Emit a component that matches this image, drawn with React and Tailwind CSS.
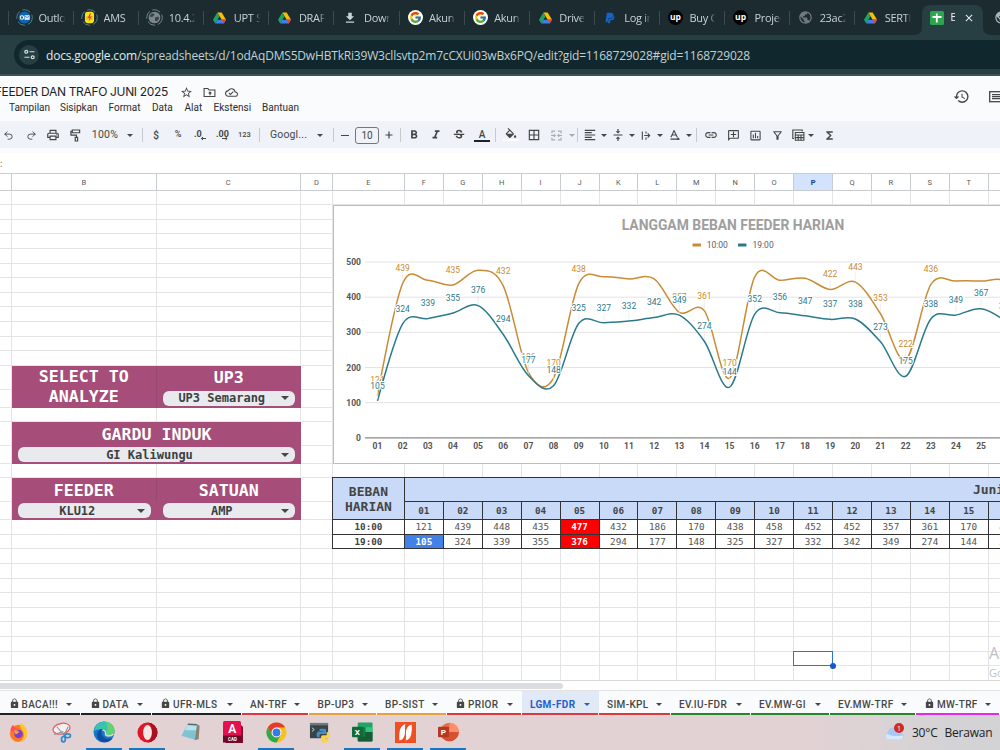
import React from 'react'
import { Undo2, Redo2 } from 'lucide-react'
import { FcGoogle } from 'react-icons/fc'
import { FaPaypal } from 'react-icons/fa'
import {
  MdOutlineLocalPrintshop,
  MdFormatBold,
  MdFormatItalic,
  MdStrikethroughS,
  MdFormatColorFill,
  MdBorderAll,
  MdFormatAlignLeft,
  MdLink,
  MdOutlineAddComment,
  MdInsertChartOutlined,
  MdOutlineFilterAlt,
  MdFunctions,
  MdHistory,
  MdStarBorder,
  MdOutlineCloudDone,
  MdLock,
  MdDownload,
  MdPublic,
  MdClose,
} from 'react-icons/md'

// ---------- data ----------

const browserTabs = [
  { icon: 'outlook', label: 'Outlook' },
  { icon: 'ams', label: 'AMS' },
  { icon: 'globeRing', label: '10.4.2' },
  { icon: 'drive', label: 'UPT S' },
  { icon: 'drive', label: 'DRAFT' },
  { icon: 'download', label: 'Downl' },
  { icon: 'google', label: 'Akun' },
  { icon: 'google', label: 'Akun' },
  { icon: 'drive', label: 'Drive' },
  { icon: 'paypal', label: 'Log in' },
  { icon: 'up', label: 'Buy C' },
  { icon: 'up', label: 'Projec' },
  { icon: 'globe', label: '23ac2' },
  { icon: 'drive', label: 'SERTI' },
]

const columns = ['', 'B', 'C', 'D', 'E', 'F', 'G', 'H', 'I', 'J', 'K', 'L', 'M', 'N', 'O', 'P', 'Q', 'R', 'S', 'T', 'U']

const morning = [121, 439, 448, 435, 477, 432, 186, 170, 438, 458, 452, 452, 357, 361, 170, 458, 448, 454, 422, 443, 353, 222, 436, 446, 446, 444, 360]
const evening = [105, 324, 339, 355, 376, 294, 177, 148, 325, 327, 332, 342, 349, 274, 144, 352, 356, 347, 337, 338, 273, 175, 338, 349, 367, 331, 270]

// days that have a visible label on the 10:00 line
const morningLabels = [1, 2, 4, 6, 7, 8, 9, 13, 14, 15, 19, 20, 21, 22, 23]

const sheetTabs = [
  { name: 'BACA!!!', lock: true, size: 'w-[81px]', line: 'border-[#202124]' },
  { name: 'DATA', lock: true, size: 'w-[70.5px]', line: 'border-[#202124]' },
  { name: 'UFR-MLS', lock: true, size: 'w-[90px]', line: 'border-[#202124]' },
  { name: 'AN-TRF', size: 'w-[67.5px]', line: 'border-[#d93a3f]' },
  { name: 'BP-UP3', size: 'w-[67.5px]', line: 'border-[#e9a23b]' },
  { name: 'BP-SIST', size: 'w-[70px]', line: 'border-[#e9a23b]' },
  { name: 'PRIOR', lock: true, size: 'w-[75px]', line: 'border-[#d93a3f]' },
  { name: 'LGM-FDR', active: true, size: 'w-[77px]', line: 'border-[#d93a3f]' },
  { name: 'SIM-KPL', size: 'w-[72px]', line: 'border-[#d93a3f]' },
  { name: 'EV.IU-FDR', size: 'w-[80px]', line: 'border-[#26862c]' },
  { name: 'EV.MW-GI', size: 'w-[79px]', line: 'border-[#26862c]' },
  { name: 'EV.MW-TRF', size: 'w-[86px]', line: 'border-[#26862c]' },
  { name: 'MW-TRF', lock: true, size: 'w-[84.5px]', line: 'border-[#e22be6]' },
]

const gridCols = 'grid-cols-[12px_144.5px_144.5px_32px_71.9px_repeat(16,38.93px)]'
const gridRows =
  'grid-rows-[repeat(12,14.6px)_24.2px_17.9px_14.4px_24px_17.8px_14.1px_24px_18px_14.7px_14.6px_repeat(9,14.6px)]'

// ---------- small drawings ----------

const DriveIcon = () => (
  <svg viewBox="0 0 24 22" className="h-[12px] w-[13px]">
    <path d="M8 1h8l8 13h-8z" fill="#fbbc04" />
    <path d="M8 1 0 14l4 7 8-13z" fill="#1ea362" />
    <path d="M8 14h16l-4 7H4z" fill="#3f7ef0" />
    <path d="M16 14h8l-4 7z" fill="#ea4335" />
  </svg>
)

const TabIcon = ({ name }) => {
  switch (name) {
    case 'outlook':
      return (
        <svg viewBox="0 0 18 18" className="h-[17px] w-[17px]">
          <circle cx="9" cy="9" r="8.2" fill="none" stroke="#4b8a94" strokeWidth="1" strokeDasharray="9 3" />
          <circle cx="9" cy="9" r="6.3" fill="#0a66b8" />
          <path d="M9 6.5h5.500v5H9z" fill="#dbeafb" />
          <path d="m9 7 2.700 2.300L14.400 7" fill="none" stroke="#2b7fd0" strokeWidth=".8" />
          <circle cx="6.300" cy="9" r="1.800" fill="none" stroke="#fff" strokeWidth="1.100" />
        </svg>
      )
    case 'ams':
      return (
        <svg viewBox="0 0 18 18" className="h-[17px] w-[17px]">
          <circle cx="9" cy="9" r="8.200" fill="none" stroke="#4b8a94" strokeWidth="1" strokeDasharray="9 3" />
          <rect x="4.200" y="3" width="9.600" height="12" rx="3" fill="#fbe11a" />
          <path d="M9.500 4.500 7 9.500h2L8 13.500l3.500-5.500h-2l1-3.500z" fill="#e0342b" />
          <path d="M5.500 8.500h7M5.500 10.500h7" stroke="#c98a1c" strokeWidth=".8" />
        </svg>
      )
    case 'globeRing':
      return (
        <svg viewBox="0 0 18 18" className="h-[17px] w-[17px]">
          <circle cx="9" cy="9" r="8.200" fill="none" stroke="#6f9298" strokeWidth="1" strokeDasharray="9 3" />
          <circle cx="9" cy="9" r="6.200" fill="#7f8588" />
          <path d="M5 5.500q3-1.500 4 .5-1 2-3 2.500L4 8zM9.500 9l3.500-1 1 2-2.500 3-2-.5z" fill="#33444a" />
        </svg>
      )
    case 'globe':
      return <MdPublic className="h-[15px] w-[15px] text-[#70797d]" />
    case 'download':
      return <MdDownload className="h-[14px] w-[14px] text-[#c5d6d9]" />
    case 'google':
      return (
        <span className="flex h-[15px] w-[15px] items-center justify-center rounded-full bg-white">
          <FcGoogle className="h-[13px] w-[13px]" />
        </span>
      )
    case 'paypal':
      return <FaPaypal className="h-[12px] w-[12px] text-[#1464c8]" />
    case 'up':
      return (
        <span className="flex h-[15px] w-[15px] items-center justify-center rounded-full bg-black pb-px text-[8.500px] font-bold leading-none text-white">
          up
        </span>
      )
    default:
      return <DriveIcon />
  }
}

const Caret = ({ className = 'text-[#444746]' }) => (
  <svg viewBox="0 0 6 3" className={`h-[3px] w-[6px] shrink-0 ${className}`}>
    <path d="M0 0h6L3 3z" fill="currentColor" />
  </svg>
)

// ---------- browser chrome ----------

const BrowserTabs = () => (
  <div className="flex h-[35px] shrink-0 bg-[#1c2b30] pl-[8px] font-['Open_Sans',sans-serif] text-[11px] text-[#c6d3d5]">
    {browserTabs.map((tab, i) => (
      <div key={i} className="flex h-[35px] w-[65.1px] shrink-0 items-center">
        <span className="h-[14px] w-px bg-[#3d4b50]" />
        <span className="ml-[7px] flex w-[17px] shrink-0 justify-center">
          <TabIcon name={tab.icon} />
        </span>
        <span className="ml-[5.500px] mt-px w-[27px] overflow-hidden whitespace-nowrap tracking-[-0.300px] [mask-image:linear-gradient(to_right,black_75%,transparent_97%)]">
          {tab.label}
        </span>
      </div>
    ))}
    <div className="relative mt-[5px] ml-[3px] flex h-[30px] w-[61px] shrink-0 items-center rounded-t-[8px] bg-[#273e43] pb-[5px] text-[#e3eef0]">
      {/* flared feet of the active tab */}
      <svg viewBox="0 0 77 8" className="absolute bottom-0 -left-[8px] h-[8px] w-[77px] text-[#273e43]">
        <path d="M0 8q8 0 8-8v8zM77 8q-8 0-8-8v8z" fill="currentColor" />
      </svg>
      <svg viewBox="0 0 14 14" className="ml-[8px] h-[14px] w-[14px]">
        <rect width="14" height="14" rx="1.500" fill="#2da44f" />
        <path d="M6.800 2.500v9M2.500 6h9" stroke="#fff" strokeWidth="1.800" />
      </svg>
      <span className="ml-[6px] w-[5px] overflow-hidden">E</span>
      <MdClose className="ml-[8px] h-[12px] w-[12px]" />
    </div>
    <MdPublic className="mt-[10px] ml-[11px] h-[15px] w-[15px] shrink-0 text-[#a3b5b8]" />
  </div>
)

const AddressBar = () => (
  <div className="flex h-[41px] shrink-0 items-start border-b-2 border-[#3f5257] bg-[#273e43] pl-[14px] pt-[5px]">
    <div className="flex h-[29px] w-full items-center rounded-l-full bg-[#10282d] pl-[5px]">
      <span className="flex h-[20px] w-[20px] items-center justify-center rounded-full bg-[#273e43]">
        <svg viewBox="0 0 12 12" className="h-[11px] w-[11px]" fill="none" stroke="#d5e2e4" strokeWidth="1.300">
          <circle cx="2.500" cy="3" r="1.600" />
          <path d="M6 3h5.500M.5 9H6" />
          <circle cx="9.500" cy="9" r="1.600" />
        </svg>
      </span>
      <span className="ml-[7px] mt-[2px] whitespace-nowrap font-['Open_Sans',sans-serif] text-[12px] tracking-[-0.185px] text-[#c4d0d2]">
        <span className="text-[#e2eaec]">docs.google.com</span>
        /spreadsheets/d/1odAqDMS5DwHBTkRi39W3cllsvtp2m7cCXUi03wBx6PQ/edit?gid=1168729028#gid=1168729028
      </span>
    </div>
  </div>
)

// ---------- docs header ----------

const DocsHeader = () => (
  <div className="flex h-[45px] shrink-0 justify-between bg-[#f9fbfd] text-[#444746]">
    <div className="pt-[8px]">
      <div className="flex h-[16px] items-center">
        <span className="flex w-[168px] justify-end overflow-hidden whitespace-nowrap font-['Inter',sans-serif] text-[12px] tracking-[-0.330px] text-[#1f1f1f]">
          FEEDER DAN TRAFO JUNI 2025
        </span>
        <MdStarBorder className="ml-[12px] h-[13px] w-[13px]" />
        <svg viewBox="0 0 24 24" className="ml-[10px] h-[13px] w-[13px]" fill="none" stroke="currentColor" strokeWidth="2">
          <path d="M2 19.500v-15h7l2 3h11v12z" />
          <path d="M13 17v-6M10.500 13.500 13 11l2.500 2.500" />
        </svg>
        <MdOutlineCloudDone className="ml-[9px] h-[13px] w-[13px]" />
      </div>
      <div className="flex h-[14px] items-center gap-[11.500px] pl-[9px] font-['Roboto',sans-serif] text-[10px] text-[#2b2d2e]">
        <span className="w-[39.500px]">Tampilan</span>
        <span className="w-[37px]">Sisipkan</span>
        <span className="w-[32px]">Format</span>
        <span className="w-[21px]">Data</span>
        <span className="w-[17.500px]">Alat</span>
        <span className="w-[37px]">Ekstensi</span>
        <span>Bantuan</span>
      </div>
    </div>
    <div className="flex w-[47px] shrink-0 items-center gap-[19px] overflow-hidden pb-[4px]">
      <MdHistory className="h-[17px] w-[17px] shrink-0" />
      <svg viewBox="0 0 16 12" className="h-[12px] w-[16px] shrink-0" fill="none" stroke="currentColor" strokeWidth="1.300">
        <rect x=".7" y=".7" width="14.600" height="10" />
        <path d="M3 3.700h10M3 5.700h10M3 7.700h10" />
      </svg>
    </div>
  </div>
)

const Tool = ({ size = 'w-[22px]', children }) => (
  <span className={`flex ${size} shrink-0 items-center justify-center`}>{children}</span>
)

const Sep = ({ className }) => <span className={`h-[14px] w-px shrink-0 bg-[#c7cacd] ${className}`} />

const Toolbar = () => (
  <div className="flex h-[32px] shrink-0 flex-col bg-[#f9fbfd]">
    <div className="flex h-[27px] items-center overflow-hidden bg-[#eff2f8] pt-px pr-2 font-['Roboto',sans-serif] text-[10.500px] font-medium text-[#444746]">
      <Tool size="w-[20px]"><Undo2 className="-ml-[3px] h-[11px] w-[11px]" /></Tool>
      <Tool><Redo2 className="h-[11px] w-[11px]" /></Tool>
      <Tool><MdOutlineLocalPrintshop className="h-[14px] w-[14px]" /></Tool>
      <Tool>
        <svg viewBox="0 0 12 14" className="h-[13px] w-[11px]" fill="none" stroke="currentColor" strokeWidth="1.300">
          <path d="M2.500 1h8v3h-8zM2.500 2.500H1v4h6v2.500" />
          <path d="M5.700 9h2.600v4H5.700z" />
        </svg>
      </Tool>
      <Tool size="w-[38px]"><span className="font-normal tracking-[0.300px]">100%</span></Tool>
      <Tool size="w-[12px]"><Caret /></Tool>
      <Sep className="ml-[6px] mr-[2px]" />
      <Tool><span className="text-[10px]">$</span></Tool>
      <Tool><span className="text-[9px]">%</span></Tool>
      <Tool>
        <svg viewBox="0 0 13 12" className="h-[12px] w-[13px] overflow-visible">
          <text x="0" y="7.500" fontSize="9" fontWeight="700" fill="currentColor">.0</text>
          <path d="M12 9.500H7.500M9 8l-1.700 1.500L9 11" stroke="currentColor" fill="none" />
        </svg>
      </Tool>
      <Tool>
        <svg viewBox="0 0 13 12" className="h-[12px] w-[13px] overflow-visible">
          <text x="0" y="7.500" fontSize="9" fontWeight="700" fill="currentColor">.00</text>
          <path d="M6 9.500h5M9.500 8l1.700 1.500L9.500 11" stroke="currentColor" fill="none" />
        </svg>
      </Tool>
      <Tool size="w-[23px]"><span className="text-[7.500px]">123</span></Tool>
      <Sep className="ml-[3px] mr-[8px]" />
      <span className="w-[44px] shrink-0 pl-[2px] font-normal tracking-[0.150px]">Googl...</span>
      <Tool size="w-[16px]"><Caret /></Tool>
      <Sep className="ml-[5px] mr-[1px]" />
      <Tool size="w-[20px]"><span className="h-px w-[8px] bg-[#444746]" /></Tool>
      <span className="flex h-[17px] w-[24px] shrink-0 items-center justify-center rounded-[3px] border border-[#747775] text-[10px] font-normal">10</span>
      <Tool size="w-[20px]">
        <svg viewBox="0 0 8 8" className="h-[8px] w-[8px]"><path d="M4 .5v7M.5 4h7" stroke="currentColor" strokeWidth="1.200" /></svg>
      </Tool>
      <Sep className="ml-[1px] mr-[2px]" />
      <Tool><MdFormatBold className="h-[14px] w-[14px]" /></Tool>
      <Tool><MdFormatItalic className="h-[14px] w-[14px]" /></Tool>
      <Tool size="w-[23px]"><MdStrikethroughS className="h-[14px] w-[14px]" /></Tool>
      <Tool size="w-[24px]">
        <span className="flex w-[16px] flex-col items-center border-b-[2.500px] border-[#202124] text-[10px] leading-[11px]">A</span>
      </Tool>
      <Sep className="ml-[1px] mr-[3px]" />
      <Tool size="w-[23px]">
        <span className="-mt-[2px] flex w-[16px] flex-col items-center border-b-[2.500px] border-white">
          {/* bucket only, the colour strip below it is the border */}
          <span className="h-[11px] overflow-hidden">
            <MdFormatColorFill className="h-[14px] w-[14px]" />
          </span>
        </span>
      </Tool>
      <Tool size="w-[23px]"><MdBorderAll className="h-[14px] w-[14px]" /></Tool>
      <Tool size="w-[23px]">
        <svg viewBox="0 0 12 12" className="h-[11px] w-[11px] text-[#a9acae]" fill="none" stroke="currentColor" strokeWidth="1.200">
          <path d="M4.500 1.200H1v2.500M7.500 1.200H11v2.500M4.500 10.800H1V8.300M7.500 10.800H11V8.300M0 6h4.500M12 6H7.500M3 4.500 4.600 6 3 7.500M9 4.500 7.400 6 9 7.500" />
        </svg>
      </Tool>
      <Tool size="w-[8px]"><Caret className="text-[#a9acae]" /></Tool>
      <Sep className="ml-[1px] mr-[2px]" />
      <Tool size="w-[20px]"><MdFormatAlignLeft className="h-[14px] w-[14px]" /></Tool>
      <Tool size="w-[8px]"><Caret /></Tool>
      <Tool size="w-[20px]">
        <svg viewBox="0 0 10 12" className="h-[12px] w-[10px]" fill="currentColor">
          <path d="M.5 5.400h9v1.200h-9zM4.400 0h1.200v2.300h1.700L5 4.600 2.700 2.300h1.700zM4.400 12h1.200V9.700h1.700L5 7.400 2.700 9.700h1.700z" />
        </svg>
      </Tool>
      <Tool size="w-[8px]"><Caret /></Tool>
      <Tool size="w-[20px]">
        <svg viewBox="0 0 10 12" className="h-[11px] w-[10px]" fill="none" stroke="currentColor" strokeWidth="1.200">
          <path d="M1 1.500v9M5 1.500v2.300M5 8.200v2.300M3 6h6M6.800 3.800 9 6 6.800 8.200" />
        </svg>
      </Tool>
      <Tool size="w-[8px]"><Caret /></Tool>
      <Tool>
        <svg viewBox="0 0 11 11" className="h-[10px] w-[10px]" fill="none" stroke="currentColor" strokeWidth="1.200">
          <path d="M1 8 4.500.7 8 8M2.300 5.500h4.400M.5 10h9M8.300 8.500 10 10l-1.700 1.500" />
        </svg>
      </Tool>
      <Tool size="w-[6px]"><Caret /></Tool>
      <Sep className="ml-[4px] mr-[2px]" />
      <Tool size="w-[24px]"><MdLink className="h-[14px] w-[14px]" /></Tool>
      <Tool size="w-[20px]"><MdOutlineAddComment className="h-[13px] w-[13px] -scale-x-100" /></Tool>
      <Tool size="w-[24px]"><MdInsertChartOutlined className="h-[13px] w-[13px]" /></Tool>
      <Tool size="w-[20px]"><MdOutlineFilterAlt className="h-[13px] w-[13px]" /></Tool>
      <Tool>
        <svg viewBox="0 0 13 12" className="h-[12px] w-[13px]" fill="none" stroke="currentColor" strokeWidth="1.100">
          <path d="M2 9.500H.8V1h9.400v1.500" />
          <path d="M3.300 3.500h8.600v7.700H3.300zM3.300 6h8.600M3.300 8.600h8.600M6.200 6v5.200M9 6v5.200" />
        </svg>
      </Tool>
      <Tool size="w-[4px]"><Caret /></Tool>
      <Tool size="w-[32px]"><MdFunctions className="h-[13px] w-[13px]" /></Tool>
    </div>
  </div>
)

// ---------- chart ----------

const px = (i) => 43.5 + i * 25.15
const py = (v) => 231.8 - v * 0.3515

// Catmull-Rom spline turned into bezier segments
const curve = (values) => {
  const pts = values.map((v, i) => [px(i), py(v)])
  const tangent = (i) =>
    i === 0 || i === pts.length - 1 ? [0, 0] : [(pts[i + 1][0] - pts[i - 1][0]) / 6, (pts[i + 1][1] - pts[i - 1][1]) / 6]
  let d = `M${pts[0][0]} ${pts[0][1]}`
  for (let i = 1; i < pts.length; i++) {
    const a = tangent(i - 1)
    const b = tangent(i)
    d += `C${pts[i - 1][0] + a[0]} ${pts[i - 1][1] + a[1]} ${pts[i][0] - b[0]} ${pts[i][1] - b[1]} ${pts[i][0]} ${pts[i][1]}`
  }
  return d
}

const Labels = ({ values, color, only }) =>
  values.map((v, i) =>
    only && !only.includes(i + 1) ? null : (
      <g key={i}>
        <line x1={px(i)} x2={px(i)} y1={py(v) - 10} y2={py(v) - 2} stroke="#e8e8e8" strokeWidth="0.7" />
        <text
          x={px(i)}
          y={py(v) - 12.3}
          textAnchor="middle"
          fontSize="8.500"
          fill={color}
          stroke="#fff"
          strokeWidth="2"
          paintOrder="stroke"
        >
          {v}
        </text>
      </g>
    )
  )

const Chart = () => (
  <svg viewBox="0 0 700 258" className="h-[258px] w-[700px] font-['Roboto',sans-serif]">
    <text x="287.700" y="24.300" fontSize="14" fontWeight="700" fill="#9e9e9e" textLength="222.500" lengthAdjust="spacingAndGlyphs">
      LANGGAM BEBAN FEEDER HARIAN
    </text>
    <rect x="358.500" y="37.500" width="8.500" height="3" rx=".5" fill="#c98b35" />
    <text x="372.700" y="42.200" fontSize="8.500" fill="#616161">10:00</text>
    <rect x="404" y="37.500" width="8.500" height="3" rx=".5" fill="#2b7a8c" />
    <text x="418.500" y="42.200" fontSize="8.500" fill="#616161">19:00</text>

    {[0, 100, 200, 300, 400, 500].map((v) => (
      <g key={v}>
        <line x1="31" x2="700" y1={py(v)} y2={py(v)} stroke={v ? '#e3e3e3' : '#8a8a8a'} strokeWidth={v ? 1 : 1.2} />
        <text x="27" y={py(v) + 3} textAnchor="end" fontSize="8.500" fontWeight="700" fill="#555">
          {v}
        </text>
      </g>
    ))}
    {morning.map((_, i) => (
      <text key={i} x={px(i)} y="242.800" textAnchor="middle" fontSize="8.500" fontWeight="700" fill="#555">
        {String(i + 1).padStart(2, '0')}
      </text>
    ))}

    <path d={curve(morning)} fill="none" stroke="#c98b35" strokeWidth="1.500" />
    <Labels values={morning} color="#c98b35" only={morningLabels} />
    <path d={curve(evening)} fill="none" stroke="#2b7a8c" strokeWidth="1.500" />
    <Labels values={evening} color="#2b7a8c" />
  </svg>
)

// ---------- sheet ----------

const Title = ({ className, children }) => (
  <div className={`flex items-center justify-center bg-[#a64d79] pt-px text-center text-[16.600px] font-bold leading-[20px] text-white ${className}`}>
    {children}
  </div>
)

const Select = ({ className, children }) => (
  <div className={`bg-[#a64d79] px-[6px] pt-px pb-[2px] ${className}`}>
    <div className="flex h-full items-center rounded-[6px] bg-[#e8eaed] pr-[6px] text-[12px] font-bold text-[#3c4043]">
      <span className="flex-1 text-center leading-none">{children}</span>
      <svg viewBox="0 0 8 4" className="h-[4px] w-[8px]">
        <path d="M0 0h8L4 4z" fill="#444746" />
      </svg>
    </div>
  </div>
)

const cellTone = (value, max, min) => {
  if (value === max) return 'bg-[#ff0000] font-bold text-white'
  if (value === min) return 'bg-[#4281e8] font-bold text-white'
  return 'bg-white text-[#555]'
}

const LoadRow = ({ time, values, row, min }) => (
  <>
    <div className={`col-start-5 ${row} -ml-px flex items-center justify-center border-r border-b border-l border-[#333] bg-white font-bold text-[#444]`}>
      {time}
    </div>
    {values.slice(0, 16).map((v, i) => (
      <div
        key={i}
        className={`${row} flex items-center justify-center border-r border-b border-[#333] ${cellTone(v, Math.max(...values), min)}`}
        style={{ gridColumn: i + 6 }}
      >
        {v}
      </div>
    ))}
  </>
)

const Sheet = () => (
  <div className="relative h-[507px] shrink-0 overflow-hidden bg-white">
    <div className={`grid h-[17.600px] w-max ${gridCols} border-t border-[#c9cccf] font-['Roboto',sans-serif] text-[7.500px]`}>
      {columns.map((c) => (
        <div
          key={c}
          className={`flex items-center justify-center border-r border-b border-[#c9cccf] pt-px ${c === 'P' ? 'bg-[#d3e3fd] font-bold text-[#1c3c77]' : 'text-[#575b5f]'}`}
        >
          {c}
        </div>
      ))}
    </div>

    <div className={`grid w-max ${gridCols} ${gridRows} font-['DejaVu_Sans_Mono',monospace] text-[9.300px] leading-none`}>
      {/* grid lines: one strip per row and one per column */}
      {Array.from({ length: 31 }, (_, i) => (
        <div key={`r${i}`} className="border-b border-[#e3e4e5]" style={{ gridRow: i + 1, gridColumn: '1 / -1' }} />
      ))}
      {columns.map((c, i) => (
        <div key={`c${i}`} className="border-r border-[#e3e4e5]" style={{ gridRow: '1 / -1', gridColumn: i + 1 }} />
      ))}

      <Title className="col-start-2 row-start-13 row-span-2 border-r border-[#9a4870]">SELECT TO<br />ANALYZE</Title>
      <Title className="col-start-3 row-start-13">UP3</Title>
      <Select className="col-start-3 row-start-14">UP3 Semarang</Select>

      <Title className="col-start-2 col-span-2 row-start-16">GARDU INDUK</Title>
      <Select className="col-start-2 col-span-2 row-start-17">GI Kaliwungu</Select>

      <Title className="col-start-2 row-start-19 border-r border-[#9a4870]">FEEDER</Title>
      <Title className="col-start-3 row-start-19">SATUAN</Title>
      <Select className="col-start-2 row-start-20">KLU12</Select>
      <Select className="col-start-3 row-start-20">AMP</Select>

      <div className="col-start-5 -col-end-1 row-start-2 row-end-18 border border-[#bdbdbd] bg-white">
        <Chart />
      </div>

      <div className="col-start-5 row-start-19 row-span-2 -mt-px -ml-px flex items-center justify-center border border-[#333] bg-[#c9daf8] pt-px text-center text-[13px] font-bold leading-[15.500px] text-[#444]">
        BEBAN<br />HARIAN
      </div>
      <div className="col-start-6 -col-end-1 row-start-19 -mt-px flex items-center whitespace-nowrap border-t border-b border-[#333] bg-[#c9daf8] pl-[568px] text-[13px] font-bold text-[#444]">
        Juni 2025
      </div>
      {morning.slice(0, 16).map((_, i) => (
        <div
          key={i}
          className="row-start-20 flex items-center justify-center border-r border-b border-[#333] bg-[#c9daf8] font-bold text-[#444]"
          style={{ gridColumn: i + 6 }}
        >
          {String(i + 1).padStart(2, '0')}
        </div>
      ))}
      <LoadRow time="10:00" values={morning} row="row-start-21" />
      <LoadRow time="19:00" values={evening} row="row-start-22" min={105} />

      {/* selected cell */}
      <div className="relative col-start-16 row-start-30 -ml-px -mt-px border-[1.500px] border-[#2d72d9]">
        <span className="absolute -right-[4px] -bottom-[4px] h-[6px] w-[6px] rounded-full bg-[#1657c9]" />
      </div>
    </div>

    <div className="absolute left-[989px] top-[471px] whitespace-nowrap font-['Open_Sans',sans-serif] text-[#bfbfbf]">
      <div className="text-[16px] leading-[19px]">Activate Windows</div>
      <div className="text-[11px] leading-[20px]">Go to Settings</div>
    </div>
  </div>
)

const SheetTabs = () => (
  <div className="flex h-[25px] shrink-0 overflow-hidden border-t border-[#e1e3e5] bg-[#f9fbfd] font-['Roboto',sans-serif] text-[10px] font-medium tracking-[0.350px] text-[#444746]">
    {sheetTabs.map((tab) => (
      <div key={tab.name} className={`${tab.size} shrink-0 pr-px ${tab.active ? 'bg-[#e1e9f7] font-bold text-[#1f5fcf]' : ''}`}>
        <div className={`flex h-full items-center border-b-2 pt-[4px] pr-[8px] pl-[8.500px] ${tab.line}`}>
          {tab.lock && <MdLock className="-mt-px mr-[2px] h-[13px] w-[11px] shrink-0" />}
          <span className="flex-1 whitespace-nowrap">{tab.name}</span>
          <Caret className={tab.active ? 'text-[#1f5fcf]' : 'text-[#444746]'} />
        </div>
      </div>
    ))}
  </div>
)

// ---------- task bar ----------

const Firefox = () => (
  <svg viewBox="0 0 22 22" className="h-[21px] w-[21px]">
    <circle cx="11" cy="12" r="9" fill="#ff7a1f" />
    <path d="M13 1c5 3 8 7 7 12a9 9 0 0 1-9 8c6-2 7-8 4-12-2-2-3-5-2-8z" fill="#ffc531" />
    <path d="M2.500 9C3 6 4 4 5.500 3c.3 2 1.500 3 3.500 3.500L6 11z" fill="#ff4f5e" />
    <circle cx="11" cy="12.500" r="4.500" fill="#7a3fd6" />
    <path d="M6 9c3-1 5 0 6 2-2 0-2 2-4 2z" fill="#ff9a2b" />
  </svg>
)

const Snip = () => (
  <svg viewBox="0 0 22 22" className="h-[21px] w-[21px]" fill="none">
    <ellipse cx="11" cy="7" rx="9" ry="5.500" fill="#f5f0f0" stroke="#df5c60" strokeWidth="1.300" transform="rotate(-12 11 7)" />
    <path d="m6 5 9 10M18 5l-5 10M3 13l10-3" stroke="#87929c" strokeWidth="1.100" />
    <ellipse cx="13" cy="18" rx="2" ry="2.800" stroke="#2d8bd0" strokeWidth="1.800" />
    <ellipse cx="17.500" cy="14.500" rx="2.900" ry="2" stroke="#2d8bd0" strokeWidth="1.800" />
  </svg>
)

const Edge = () => (
  <svg viewBox="0 0 22 22" className="h-[22px] w-[22px]">
    <circle cx="11" cy="11" r="10.500" fill="#1477c9" />
    <path d="M1 10C2 4 6 .5 11 .5c6 0 10.500 4 10.500 9 0 4-3 5.500-6 5.500-2 0-3-.8-2.500-2 1-3-1-5-4-5-3.500 0-6.500 1-8 2z" fill="#38c3b0" />
    <path d="M13 1c5 .5 8.500 4 8.500 8.500 0 4-3 5.500-6 5.500-2 0-3-.8-2.500-2 2-4 2-9 0-12z" fill="#63d36e" />
    <path d="M9 8c-2 5 1 9.500 6 10 2 0 4-.7 5-1.500-3 5-9 6-13 3.500C2 16 4 9 9 8z" fill="#0d4f9e" />
    <path d="M9.500 9c2 0 3.500 1.500 3 3.500-.3 1.500.5 2.500 3 2.500 2 0 4-.7 5-2" fill="none" stroke="#e3d3d4" strokeWidth="1.500" />
  </svg>
)

const Opera = () => (
  <svg viewBox="0 0 22 22" className="h-[21px] w-[21px]">
    <circle cx="11" cy="11" r="10.500" fill="#e0162b" />
    <path d="M11 .5a10.500 10.500 0 0 1 0 21c6-2 7-18 0-21z" fill="#a90f1e" />
    <ellipse cx="11" cy="11" rx="4.600" ry="7.800" fill="#f3e6e6" />
  </svg>
)

const Notes = () => (
  <svg viewBox="0 0 22 22" className="h-[20px] w-[21px]">
    <path d="m17 2 4 2-1 15-5 1z" fill="#8b8172" />
    <path d="M8 2.500 18 3l-2 16.500L1 15z" fill="#7fc3d3" />
    <path d="M8 2.500 18 3l-1 6L5 9z" fill="#b9e2e9" />
    <path d="M8 2.500 18 3" stroke="#4b6b73" strokeWidth="1.500" />
  </svg>
)

const AutoCad = () => (
  <svg viewBox="0 0 20 22" className="h-[22px] w-[20px] font-['Roboto',sans-serif]">
    <rect width="18" height="21" rx="1.500" fill="#e51050" />
    <path d="m18 4 2 2v16H3l-2-2h17z" fill="#8b0a33" />
    <rect y="14.500" width="19" height="7" fill="#6e0829" />
    <text x="9.300" y="12" textAnchor="middle" fontSize="12" fontWeight="700" fill="#fff">A</text>
    <text x="9.500" y="20" textAnchor="middle" fontSize="4.500" fontWeight="700" fill="#fff">CAD</text>
  </svg>
)

const Chrome = () => (
  <svg viewBox="0 0 22 22" className="h-[21px] w-[21px]">
    <circle cx="11" cy="11" r="10.500" fill="#fbc116" />
    <path d="M1.900 5.750A10.500 10.500 0 0 1 20.100 5.750H11L6.500 13.600z" fill="#e33b2e" />
    <path d="M1.900 5.750A10.500 10.500 0 0 0 11 21.500l4.500-7.900h-9z" fill="#2da94f" />
    <circle cx="11" cy="11" r="5.200" fill="#fff" />
    <circle cx="11" cy="11" r="4.100" fill="#3b78e7" />
  </svg>
)

const PythonTerm = () => (
  <svg viewBox="0 0 22 22" className="h-[21px] w-[21px]">
    <rect x="1" y="1" width="19" height="16" fill="#36454a" />
    <rect x="1" y="1" width="19" height="2.500" fill="#6c7a7e" />
    <path d="m3 6 2.500 2L3 10" stroke="#cfd8da" fill="none" />
    <path d="M12 7h4q2 0 2 2v3.500h-5.500q-1.500 0-1.500 2v1.500h-1Q8 16 8 13t2.500-3H15v-.6h-4V8q0-1 1-1z" fill="#4b8bc4" />
    <path d="M18.600 10.500q3.400 0 3.400 3.500 0 3-2 3h-3v1h3.500q0 3.500-3.500 3.500-4.500 0-4.500-3V16q0-2 2-2h4z" fill="#fbd343" />
  </svg>
)

const Excel = () => (
  <svg viewBox="0 0 22 20" className="h-[20px] w-[21px] font-['Roboto',sans-serif]">
    <rect x="6" width="15.500" height="20" rx="1" fill="#21a366" />
    <path d="M6 10h15.500v9q0 1-1 1H7q-1 0-1-1z" fill="#185c37" />
    <path d="M14 5h7.500v5H14z" fill="#33c481" />
    <path d="M6 5h8v10H6z" fill="#107c41" />
    <rect y="4.500" width="11.500" height="11" rx="1" fill="#0f6b39" />
    <text x="5.700" y="13" textAnchor="middle" fontSize="8.500" fontWeight="700" fill="#fff">X</text>
  </svg>
)

// two interlocking blades
const Nitro = () => (
  <svg viewBox="0 0 22 22" className="h-[21px] w-[21px]">
    <rect width="22" height="22" fill="#f04e23" />
    <path d="M4.500 19.500Q4 14 5 9q1.200-5.500 5.800-7Q10 6 10.500 10q.2 3.500-1.500 6.500-1.500 2.500-4.500 3z" fill="#fff" />
    <path d="M17.500 2.500Q18 8 17 13q-1.200 5-5.800 6.500.8-4 .3-8-.2-3.500 1.500-6 1.500-2.500 4.500-3z" fill="#fff" />
  </svg>
)

const PowerPoint = () => (
  <svg viewBox="0 0 22 20" className="h-[20px] w-[21px] font-['Roboto',sans-serif]">
    <circle cx="12" cy="10" r="9.800" fill="#ed6c47" />
    <path d="M12 .2a9.800 9.800 0 0 1 9.800 9.800H12z" fill="#ff8f6b" />
    <path d="M2.200 10h19.600a9.800 9.800 0 0 1-19.600 0z" fill="#d35230" />
    <rect y="4.500" width="11.500" height="11" rx="1" fill="#b7371f" />
    <text x="5.700" y="13" textAnchor="middle" fontSize="8.500" fontWeight="700" fill="#fff">P</text>
  </svg>
)

const taskItems = [
  { Icon: Firefox },
  { Icon: Snip },
  { Icon: Edge, open: true },
  { Icon: Opera, open: true },
  { Icon: Notes },
  { Icon: AutoCad },
  { Icon: Chrome, open: true },
  { Icon: PythonTerm },
  { Icon: Excel, open: true },
  { Icon: Nitro, open: true },
  { Icon: PowerPoint, open: true },
]

const TaskBar = () => (
  <div className="flex h-[35px] shrink-0 justify-between bg-linear-to-r from-[#e3d2d4] from-80% to-[#d3d3d5] to-95%">
    <div className="-ml-[3.500px] flex">
      {taskItems.map(({ Icon, open }, i) => (
        <div key={i} className="flex w-[43px] flex-col items-center justify-between pt-[6px]">
          <div className="flex h-[22px] items-center"><Icon /></div>
          <div className={`h-[2px] w-[36px] ${open ? 'bg-[#1b75bf]' : ''}`} />
        </div>
      ))}
    </div>
    <div className="flex items-center pr-[7.500px] pb-px pt-[2px] font-['Open_Sans',sans-serif] text-[12px] tracking-[-0.200px] text-[#222]">
      <svg viewBox="0 0 24 20" className="mr-[5px] -mt-[3px] h-[20px] w-[24px]">
        <path d="M5 17.500a4 4 0 0 1 0-7.500 5 5 0 0 1 9-2.500A4.500 4.500 0 0 1 18 11a3.300 3.300 0 0 1 0 6.500z" fill="#a9c8f5" />
        <path d="M5 17.500a3.500 3.500 0 0 1-1-6c4 3 10 3 16 2a3.300 3.300 0 0 1-2 4z" fill="#d9e7fb" />
        <circle cx="16" cy="6" r="5" fill="#cf2c22" />
        <text x="16" y="8.500" textAnchor="middle" fontSize="7" fill="#fff">1</text>
      </svg>
      <span className="mr-[7px]">30°C</span>
      <span>Berawan</span>
    </div>
  </div>
)

const App = () => {
  return (
    <div className="flex h-[750px] w-[1000px] flex-col overflow-hidden bg-white">
      <BrowserTabs />
      <AddressBar />
      <DocsHeader />
      <Toolbar />
      {/* formula bar */}
      <div className="flex h-[20px] shrink-0 items-center text-[9px] leading-none text-[#777]">:</div>
      <Sheet />
      {/* horizontal scroll bar */}
      <div className="flex h-[10px] shrink-0 items-center border-t border-[#d5d7d9] bg-white">
        <div className="h-[6px] w-[563px] rounded-r-full bg-[#dadce0]" />
      </div>
      <SheetTabs />
      <TaskBar />
    </div>
  )
}

export default App
